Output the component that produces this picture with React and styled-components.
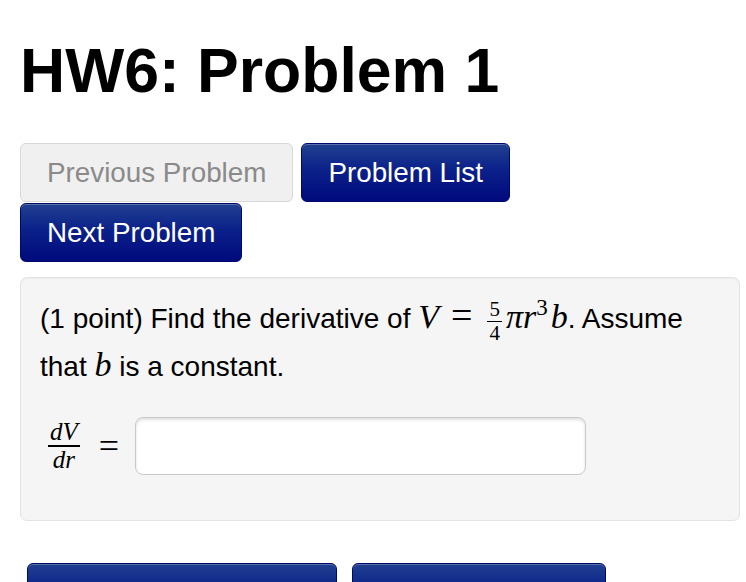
import React from "react";
import styled, { createGlobalStyle } from "styled-components";

const Global = createGlobalStyle`
  html, body { margin: 0; padding: 0; background: #fff; }
  body {
    font-family: "Liberation Sans", Helvetica, Arial, sans-serif;
    color: #000;
    -webkit-font-smoothing: antialiased;
  }
  * { box-sizing: border-box; }
`;

const Page = styled.div`
  padding: 36px 6px 0 20px;
  width: 746px;
  height: 582px;
  overflow: hidden;
`;

const Title = styled.h1`
  margin: 0;
  font-size: 62.5px;
  line-height: 68px;
  font-weight: 700;
`;

const NavBar = styled.div`
  display: flex;
  flex-wrap: wrap;
  column-gap: 8px;
  row-gap: 1px;
  margin-top: 39px;
  max-width: 500px;
`;

const Button = styled.button`
  font-family: "Liberation Sans", Helvetica, Arial, sans-serif;
  font-size: 27.8px;
  line-height: 31px;
  padding: 13px 26px;
  border-radius: 6px;
  cursor: pointer;
  white-space: nowrap;
  ${(p) =>
    p.$disabled
      ? `
    background: #f0f0f0;
    border: 1px solid #d8d8d8;
    color: #8a8a8a;
  `
      : `
    background: linear-gradient(to bottom, #20408f 0%, #0b218a 45%, #000a7c 100%);
    border: 1px solid #00086a;
    color: #fff;
    box-shadow: inset 0 1px 0 rgba(255,255,255,0.25);
  `}
`;

const ProblemBox = styled.div`
  margin-top: 15px;
  background: #f5f5f5;
  border: 1px solid #e3e3e3;
  border-radius: 7px;
  box-shadow: inset 0 1px 1px rgba(0, 0, 0, 0.04);
  padding: 19px 19px 48px 19px;
  height: 244px;
`;

const Text = styled.p`
  margin: 0;
  font-size: 28px;
  line-height: 44px;
`;

const MathVar = styled.span`
  font-family: "Liberation Serif", "Times New Roman", serif;
  font-style: italic;
  font-size: ${(p) => p.$size || 34}px;
  line-height: 0;
  margin-right: ${(p) => p.$mr || 0}px;
`;

const MathOp = styled.span`
  font-family: "Liberation Serif", "Times New Roman", serif;
  font-size: 38px;
  line-height: 0;
  margin: 0 ${(p) => p.$m || 11}px;
`;

const Frac = styled.span`
  display: inline-flex;
  flex-direction: column;
  align-items: center;
  vertical-align: ${(p) => p.$va || "12px"};
  font-family: "Liberation Serif", "Times New Roman", serif;
  font-size: ${(p) => p.$size || 21}px;
  line-height: ${(p) => p.$lh || 23}px;
  margin: 0 ${(p) => p.$m || 4}px;
`;

const Num = styled.span`
  padding: 0 2px;
  border-bottom: ${(p) => p.$bar || 1}px solid #000;
  font-style: ${(p) => (p.$italic ? "italic" : "normal")};
`;

const Den = styled.span`
  padding: 0 2px;
  font-style: ${(p) => (p.$italic ? "italic" : "normal")};
`;

const Sup = styled.sup`
  font-family: "Liberation Serif", "Times New Roman", serif;
  font-size: 23px;
  vertical-align: 13px;
  line-height: 0;
  margin-right: 3px;
`;

const AnswerRow = styled.div`
  display: flex;
  align-items: center;
  margin-top: 28px;
  padding-left: 4px;
`;

const Equals = styled.span`
  font-family: "Liberation Serif", "Times New Roman", serif;
  font-size: 36px;
  margin: 0 16px 0 15px;
`;

const AnswerInput = styled.input`
  width: 451px;
  height: 58px;
  border: 1px solid #c9c9c9;
  border-radius: 8px;
  background: #fff;
  box-shadow: inset 0 2px 3px rgba(0, 0, 0, 0.12);
  font-size: 26px;
  padding: 0 12px;
  outline: none;
`;

const ActionRow = styled.div`
  display: flex;
  gap: 15px;
  margin-top: 42px;
  margin-left: 7px;
`;

export default function App() {
  return (
    <>
      <Global />
      <Page>
        <Title>HW6: Problem 1</Title>
        <NavBar>
          <Button $disabled>Previous Problem</Button>
          <Button>Problem List</Button>
          <Button>Next Problem</Button>
        </NavBar>
        <ProblemBox>
          <Text>
            (1 point) Find the derivative of <MathVar $mr={1}>V</MathVar>
            <MathOp>=</MathOp>
            <Frac>
              <Num>5</Num>
              <Den>4</Den>
            </Frac>
            <MathVar>π</MathVar>
            <MathVar>r</MathVar>
            <Sup>3</Sup>
            <MathVar>b</MathVar>. Assume
            <br />
            that <MathVar>b</MathVar> is a constant.
          </Text>
          <AnswerRow>
            <Frac $size={25} $lh={26} $va="0" $m={0}>
              <Num $italic $bar={2}>dV</Num>
              <Den $italic>dr</Den>
            </Frac>
            <Equals>=</Equals>
            <AnswerInput type="text" />
          </AnswerRow>
        </ProblemBox>
        <ActionRow>
          <Button>Preview My Answers</Button>
          <Button>Submit Answers</Button>
        </ActionRow>
      </Page>
    </>
  );
}
